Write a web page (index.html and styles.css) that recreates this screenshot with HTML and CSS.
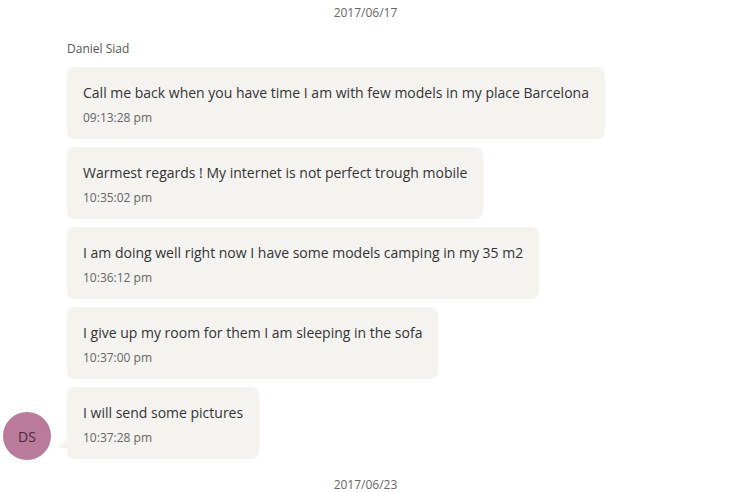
FILE: index.html
```html
<!DOCTYPE html>
<html>
<head>
<meta charset="utf-8">
<link rel="stylesheet" href="styles.css">
</head>
<body>
<div class="chat">
  <div class="date">2017/06/17</div>
  <div class="group">
    <div class="avatar">DS</div>
    <div class="messages">
      <div class="name">Daniel Siad</div>
      <div class="bubble">
        <div class="text">Call me back when you have time I am with few models in my place Barcelona</div>
        <div class="time">09:13:28 pm</div>
      </div>
      <div class="bubble">
        <div class="text">Warmest regards ! My internet is not perfect trough mobile</div>
        <div class="time">10:35:02 pm</div>
      </div>
      <div class="bubble">
        <div class="text">I am doing well right now I have some models camping in my 35 m2</div>
        <div class="time">10:36:12 pm</div>
      </div>
      <div class="bubble">
        <div class="text">I give up my room for them I am sleeping in the sofa</div>
        <div class="time">10:37:00 pm</div>
      </div>
      <div class="bubble last">
        <div class="text">I will send some pictures</div>
        <div class="time">10:37:28 pm</div>
      </div>
    </div>
  </div>
  <div class="date date-next">2017/06/23</div>
</div>
</body>
</html>
```
FILE: styles.css
```css
html, body {
  margin: 0;
  padding: 0;
  background: #ffffff;
}
body {
  font-family: "Open Sans", "Noto Sans", sans-serif;
  color: #333333;
  width: 738px;
  height: 492px;
  overflow: hidden;
}
.chat {
  display: flex;
  flex-direction: column;
}
.date {
  text-align: center;
  font-size: 12px;
  line-height: 16px;
  color: #666666;
  padding-top: 5px;
  padding-right: 7px;
}
.date-next {
  padding-top: 18px;
}
.group {
  display: flex;
  align-items: flex-end;
  margin-top: 20px;
}
.avatar {
  width: 48px;
  height: 48px;
  border-radius: 50%;
  background: #b97b99;
  color: #4a2a3c;
  font-size: 14px;
  display: flex;
  align-items: center;
  justify-content: center;
  margin-left: 3px;
  margin-bottom: -1px;
  flex: none;
}
.messages {
  display: flex;
  flex-direction: column;
  align-items: flex-start;
  gap: 8px;
  margin-left: 16px;
}
.name {
  font-size: 12px;
  line-height: 16px;
  color: #555555;
  margin-bottom: 2px;
}
.bubble {
  position: relative;
  background: #f4f3f0;
  border-radius: 8px;
  padding: 16px 16px 12px 16px;
}
.bubble.last::before {
  content: "";
  position: absolute;
  left: -10px;
  bottom: 11px;
  width: 0;
  height: 0;
  border-right: 10px solid #f4f3f0;
  border-top: 8px solid transparent;
}
.text {
  font-size: 14px;
  line-height: 20px;
  color: #333333;
  white-space: nowrap;
}
.time {
  font-size: 12px;
  line-height: 18px;
  color: #666666;
  margin-top: 6px;
}
```
